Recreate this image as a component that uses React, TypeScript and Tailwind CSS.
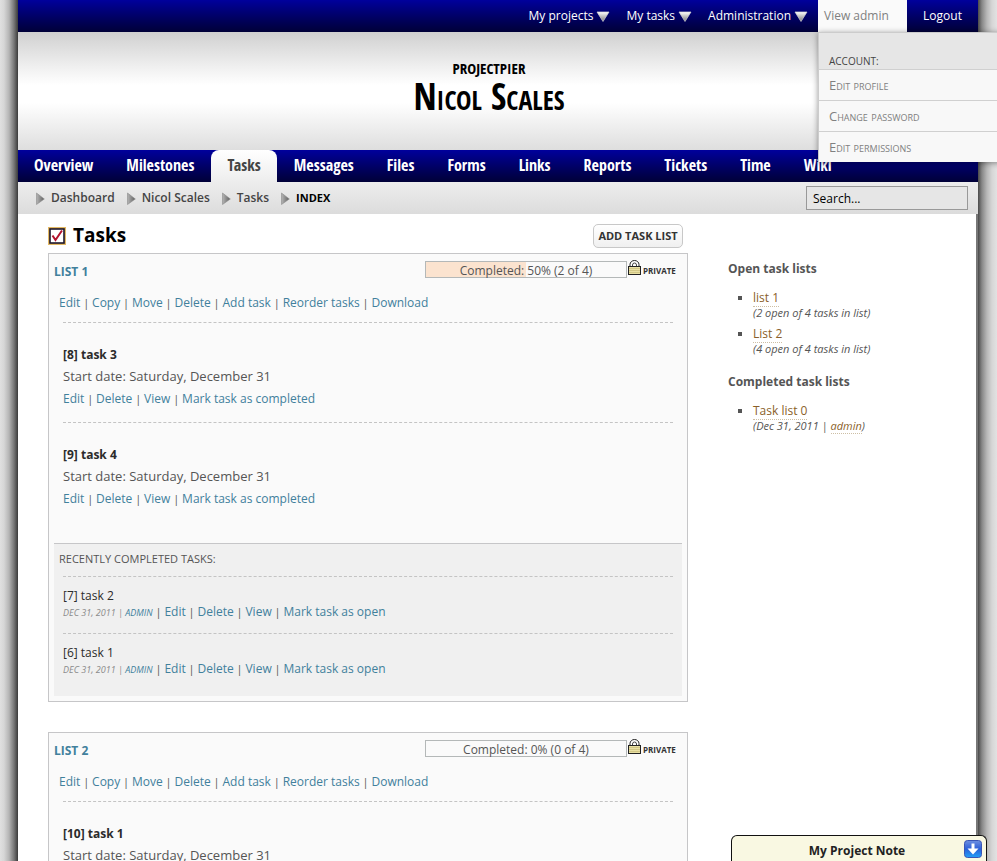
import { Fragment, type ReactNode } from "react";

function ArrowDown() {
  return (
    <svg width="14" height="11" viewBox="0 0 14 11" aria-hidden="true">
      <defs>
        <linearGradient id="down" x1="0" y1="0" x2="0" y2="1">
          <stop offset="0" stopColor="#ffffff" />
          <stop offset="1" stopColor="#777777" />
        </linearGradient>
      </defs>
      <path d="M1 1h12L7 10.500z" fill="url(#down)" stroke="#d4d4d4" strokeWidth=".7" />
    </svg>
  );
}

function ArrowRight() {
  return (
    <svg width="9" height="13" viewBox="0 0 9 13" aria-hidden="true">
      <defs>
        <linearGradient id="right" x1="0" y1="0" x2="1" y2="0">
          <stop offset="0" stopColor="#b5b5b5" />
          <stop offset="1" stopColor="#5f5f5f" />
        </linearGradient>
      </defs>
      <path d="M.5 1v11.500L8.300 7z" fill="url(#right)" stroke="#8a8a8a" strokeWidth=".6" />
    </svg>
  );
}

function Lock() {
  return (
    <svg width="13" height="15" viewBox="0 0 13 15" aria-hidden="true">
      <path d="M2 7V4.500a4.500 4 0 0 1 9 0V7" fill="#fff" stroke="#222" />
      <path d="M4.500 7V5a2 2 0 0 1 4 0v2" fill="none" stroke="#444" />
      <rect x=".5" y="6.500" width="12" height="8" fill="#e9e0a4" stroke="#222" />
      <path d="M1 8.500h11M1 10.500h11M1 12.500h11" stroke="#c9bc78" strokeWidth=".7" />
    </svg>
  );
}

function TaskIcon() {
  return (
    <svg width="18" height="18" viewBox="0 0 18 18" aria-hidden="true">
      <rect x=".5" y=".5" width="17" height="17" fill="#d9a441" stroke="#e3b964" />
      <rect x="2" y="2" width="14" height="14" fill="#fff" stroke="#1d1830" strokeWidth="1.600" />
      <path d="M4.500 8.500l3 4.500L14 3.500" fill="none" stroke="#b3122d" strokeWidth="2" />
    </svg>
  );
}

function Links({ items }: { items: string[] }) {
  return (
    <>
      {items.map((item, i) => (
        <Fragment key={item}>
          {i > 0 && " | "}
          <a href="#" className="text-[12px] text-[#41809c]">{item}</a>
        </Fragment>
      ))}
    </>
  );
}

function OpenTask({ title }: { title: string }) {
  return (
    <li className="mx-[9px] border-t border-dashed border-[#c4c4c4] pt-[22px] pb-[13px]">
      <h3 className="text-[12px] leading-5 font-bold text-[#2b2b2b]">{title}</h3>
      <p className="text-[13px] leading-[22px]">Start date: Saturday, December 31</p>
      <p className="h-[22px] text-[11px] leading-6">
        <Links items={["Edit", "Delete", "View", "Mark task as completed"]} />
      </p>
    </li>
  );
}

function DoneTask({ title, last }: { title: string; last?: boolean }) {
  return (
    <li className={`mx-[9px] border-t border-dashed border-[#c4c4c4] pt-[11px] ${last ? "pb-5" : "pb-[14px]"}`}>
      <h3 className="text-[12px] leading-4 text-[#2b2b2b]">{title}</h3>
      <p className="h-[15px] text-[11px] leading-4">
        <em className="text-[9px] text-[#8b8b8b] uppercase">
          Dec 31, 2011 | <a href="#" className="text-[#41809c]">admin</a>
        </em>
        {" | "}
        <Links items={["Edit", "Delete", "View", "Mark task as open"]} />
      </p>
    </li>
  );
}

function TaskList({ title, percent, label, children }: { title: string; percent: number; label: string; children: ReactNode }) {
  return (
    <section className="mb-[30px] border border-[#c6c6c8] bg-[#fafafa] p-[5px]">
      <header className="flex h-6 items-center">
        <h2 className="flex-1 pt-[2px] text-[12px] font-bold">
          <a href="#" className="text-[#41809c]">{title}</a>
        </h2>
        <div className="mb-1 flex items-center">
          <div className="relative h-[17px] w-[202px] border border-[#b4b8b8]">
            <div className="h-full bg-[#fbe3cf]" style={{ width: `${percent}%` }} />
            <span className="absolute inset-0 text-center text-[12px] leading-[17px]">{label}</span>
          </div>
          <span className="mb-1 ml-px"><Lock /></span>
          <span className="mt-1 mr-[7px] ml-[2px] w-8 text-[8px] font-bold text-[#333]">PRIVATE</span>
        </div>
      </header>
      <p className="mt-2 mb-[9px] h-[22px] pl-[5px] text-[11px] leading-6">
        <Links items={["Edit", "Copy", "Move", "Delete", "Add task", "Reorder tasks", "Download"]} />
      </p>
      {children}
    </section>
  );
}

function SideItem({ name, children }: { name: string; children: ReactNode }) {
  return (
    <li className="mb-[6px] text-[12px] leading-[15px] marker:text-[#555]">
      <a href="#" className="border-b border-dotted border-[#cdbfa5] text-[#8a5f2a]">{name}</a>
      <em className="block text-[11px]">{children}</em>
    </li>
  );
}

const tabs = ["Overview", "Milestones", "Tasks", "Messages", "Files", "Forms", "Links", "Reports", "Tickets", "Time", "Wiki"];

export default function App() {
  return (
    <div className="flex min-h-screen overflow-x-clip bg-[#e2e2e2] font-['Open_Sans','Noto_Sans',sans-serif] text-[#555]">
      <div className="min-w-[18px] flex-1 bg-[linear-gradient(to_left,#3a3a3a,#777_4px,#b5b5b5_9px,#d6d6d6_14px,#e0e0e0_18px)]" />
      <div className="flex w-full max-w-[960px] flex-col bg-white">
        <div className="flex h-8 justify-end bg-linear-to-b from-[#00009c] to-[#000038] text-[12px] text-white">
          <nav className="flex items-center gap-4 pr-[10px]">
            {["My projects", "My tasks", "Administration"].map((item) => (
              <a key={item} href="#" className="flex items-center gap-[3px]">
                {item}
                <ArrowDown />
              </a>
            ))}
          </nav>
          <div className="relative z-10 w-[89px]">
            <a href="#" className="flex h-8 items-center bg-[#fafafa] pl-[6px] text-[#808080]">View admin</a>
            <div className="absolute top-full left-0 w-[200px] border-l border-[#ccc] bg-[#f8f8f8] shadow-[0_1px_6px_#0006]">
              <h2 className="h-[37px] border-t border-[#ccc] bg-[#e6e6e6] pt-5 pl-[10px] text-[10px] leading-4 text-[#444]">ACCOUNT:</h2>
              {["Edit profile", "Change password", "Edit permissions"].map((item) => (
                <a key={item} href="#" className="block h-[31px] border-t border-[#d0d0d0] pl-[10px] text-[13px] leading-[30px] text-[#808080] [font-variant:small-caps]">
                  {item}
                </a>
              ))}
            </div>
          </div>
          <a href="#" className="flex w-[71px] items-center justify-center">Logout</a>
        </div>

        <header className="h-[118px] bg-[linear-gradient(#d0d0d0,#f0f0f0_30%,#fff_45%,#fff_60%,#dedede)] pt-7 pr-[18px] text-center font-['Open_Sans_Condensed','Open_Sans',sans-serif] font-bold text-black">
          <p className="text-[15px] leading-4">PROJECTPIER</p>
          <h1 className="text-[37px] leading-10 [font-variant:small-caps]">Nicol Scales</h1>
        </header>

        <nav className="flex h-8 gap-px bg-linear-to-b from-[#00009c] to-[#000038] font-['Open_Sans_Condensed','Open_Sans',sans-serif] text-[16px] font-bold text-white">
          {tabs.map((tab) => (
            <a
              key={tab}
              href="#"
              className={`flex items-center px-4 pb-[3px] ${tab === "Tasks" ? "rounded-t-lg bg-linear-to-b from-white to-[#ededed] text-[#444]" : ""}`}
            >
              {tab}
            </a>
          ))}
        </nav>

        <div className="flex h-8 items-center bg-linear-to-b from-[#ededed] to-[#dcdcdc] pr-[10px] pl-[18px] text-[12px]">
          <nav className="flex flex-1 items-center gap-3 font-semibold text-[#444]">
            {["Dashboard", "Nicol Scales", "Tasks"].map((item) => (
              <a key={item} href="#" className="flex items-center gap-[6px]">
                <ArrowRight />
                {item}
              </a>
            ))}
            <span className="flex items-center gap-[6px] text-[11px] font-bold text-black">
              <ArrowRight />
              INDEX
            </span>
          </nav>
          <input aria-label="Search" defaultValue="Search..." className="h-6 w-[162px] border border-[#999] bg-[#e6e6e6] px-[6px] text-[12px] text-black" />
        </div>

        <div className="flex flex-1 gap-10 border-r-2 border-[#777] pl-[30px]">
          <main className="min-w-0 flex-1">
            <div className="flex h-[39px] items-center pt-1 pr-[5px]">
              <TaskIcon />
              <h1 className="ml-[7px] flex-1 pb-px text-[19px] font-bold text-black">Tasks</h1>
              <button className="h-6 w-[90px] rounded-[5px] border border-[#c8c8c8] bg-linear-to-b from-white to-[#f0f0f0] pt-px text-[11px] font-bold whitespace-nowrap text-[#333]">
                ADD TASK LIST
              </button>
            </div>

            <TaskList title="LIST 1" percent={50} label="Completed: 50% (2 of 4)">
              <ul>
                <OpenTask title="[8] task 3" />
                <OpenTask title="[9] task 4" />
              </ul>
              <div className="mt-[21px] border-t border-[#c6c6c8] bg-[#f0f0f0]">
                <h3 className="mb-[7px] pt-[5px] pl-[5px] text-[11px] leading-5">RECENTLY COMPLETED TASKS:</h3>
                <ul>
                  <DoneTask title="[7] task 2" />
                  <DoneTask title="[6] task 1" last />
                </ul>
              </div>
            </TaskList>

            <TaskList title="LIST 2" percent={0} label="Completed: 0% (0 of 4)">
              <ul>
                <OpenTask title="[10] task 1" />
              </ul>
            </TaskList>
          </main>

          <aside className="w-[248px] pt-[45px]">
            <h2 className="mb-[11px] text-[12px] leading-5 font-bold">Open task lists</h2>
            <ul className="list-[square] pl-[25px]">
              <SideItem name="list 1">(2 open of 4 tasks in list)</SideItem>
              <SideItem name="List 2">(4 open of 4 tasks in list)</SideItem>
            </ul>
            <h2 className="mt-4 mb-[11px] text-[12px] leading-5 font-bold">Completed task lists</h2>
            <ul className="list-[square] pl-[25px]">
              <SideItem name="Task list 0">
                (Dec 31, 2011 | <a href="#" className="border-b border-dotted border-[#cdbfa5] text-[#8a5f2a]">admin</a>)
              </SideItem>
            </ul>
          </aside>
        </div>
      </div>
      <div className="min-w-[19px] flex-1 bg-[linear-gradient(to_right,#4a4a4a,#888_4px,#b8b8b8_9px,#d6d6d6_14px,#e2e2e2_19px)]" />

      <aside className="fixed right-[10px] bottom-0 flex h-[26px] w-[256px] items-center rounded-t-md border border-b-0 border-[#111] bg-[#f9f8e2] pr-1">
        <h2 className="flex-1 pt-[5px] pl-[18px] text-center text-[12px] font-bold text-[#222]">My Project Note</h2>
        <button aria-label="Collapse note">
          <svg width="18" height="18" viewBox="0 0 18 18" aria-hidden="true">
            <defs>
              <linearGradient id="note" x1="0" y1="0" x2="0" y2="1">
                <stop offset="0" stopColor="#6f8fe0" />
                <stop offset=".5" stopColor="#2c5fd8" />
                <stop offset="1" stopColor="#22a0f8" />
              </linearGradient>
            </defs>
            <rect x=".5" y=".5" width="17" height="17" rx="3" fill="url(#note)" stroke="#3a55b5" />
            <path d="M9 3.500v7" stroke="#fff" strokeWidth="3" />
            <path d="M3.500 8.500h11L9 14.500z" fill="#fff" />
          </svg>
        </button>
      </aside>
    </div>
  );
}
